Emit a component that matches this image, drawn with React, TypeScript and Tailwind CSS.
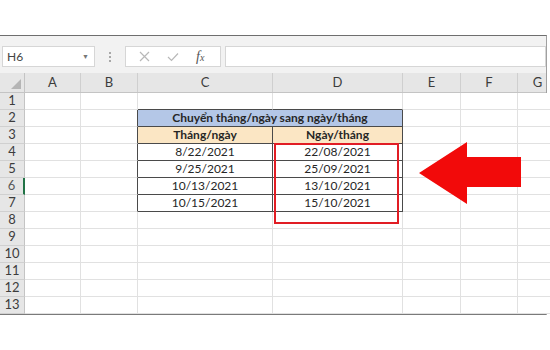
import React from "react";

const cols = ["A", "B", "C", "D", "E", "F", "G"];
const widths = ["w-[56px]", "w-[57px]", "w-[135px]", "w-[130px]", "w-[58px]", "w-[57px]", "w-[40px]"];

const dataLeft = ["8/22/2021", "9/25/2021", "10/13/2021", "10/15/2021"];
const dataRight = ["22/08/2021", "25/09/2021", "13/10/2021", "15/10/2021"];

// right border dark when cell touches table's left/right edges
function rightDark(col: number, row: number) {
  if (row < 2 || row > 7) return false;
  return col === 1 || col === 2 || col === 3;
}
function bottomDark(col: number, row: number) {
  if (col !== 2 && col !== 3) return false;
  return row >= 1 && row <= 7;
}

function Cell({ col, row }: { col: number; row: number }) {
  const rd = rightDark(col, row);
  const bd = bottomDark(col, row);
  let bg = "bg-white";
  let text = "";
  let bold = false;
  if (row === 3 && (col === 2 || col === 3)) {
    bg = "bg-[#fbe6c4]";
    bold = true;
    text = col === 2 ? "Tháng/ngày" : "Ngày/tháng";
  }
  if (row >= 4 && row <= 7 && col === 2) text = dataLeft[row - 4];
  if (row >= 4 && row <= 7 && col === 3) text = dataRight[row - 4];
  return (
    <div
      className={`${widths[col]} shrink-0 h-full flex items-center justify-center border-b border-r ${bg} ${
        rd ? "border-r-[#4a4a4a]" : "border-r-[#e1e1e1]"
      } ${bd ? "border-b-[#4a4a4a]" : "border-b-[#e1e1e1]"} ${bold ? "font-bold" : ""}`}
    >
      {text}
    </div>
  );
}

function Row({ row }: { row: number }) {
  const selected = row === 6;
  return (
    <div className="flex h-[17px]">
      <div
        className={`w-[25px] shrink-0 bg-[#e6e6e6] border-b border-b-[#d0d0d0] flex items-center justify-center text-[13px] text-[#3c3c3c] ${
          selected ? "border-r-2 border-r-[#217346] text-[#5a5a5a]" : "border-r border-r-[#c4c4c4]"
        }`}
      >
        {row}
      </div>
      {row === 2 ? (
        <>
          <Cell col={0} row={2} />
          <Cell col={1} row={2} />
          <div className="w-[265px] shrink-0 h-full flex items-center justify-center bg-[#b4c7e7] border-b border-r border-[#4a4a4a] font-bold">
            Chuyển tháng/ngày sang ngày/tháng
          </div>
          <Cell col={4} row={2} />
          <Cell col={5} row={2} />
          <Cell col={6} row={2} />
        </>
      ) : (
        cols.map((_, i) => <Cell key={i} col={i} row={row} />)
      )}
    </div>
  );
}

export default function App() {
  const rows = Array.from({ length: 13 }, (_, i) => i + 1);
  return (
    <div className="relative w-[550px] h-[350px] overflow-hidden bg-white font-['Lato',sans-serif] text-[12px] text-[#262626]">
      <div className="h-[35px]" />
      <div className="w-[547px] border-t border-t-[#6e6e6e] border-r border-r-[#a0a0a0]">
        {/* Formula bar */}
        <div className="h-[37px] bg-[#f2f2f2] flex items-center gap-[4px] pl-[2px] pt-[4px]">
          <div className="w-[93px] h-[21px] bg-white border border-[#d6d6d6] flex items-center justify-between px-[4px] text-[12px] text-[#444]">
            <span>H6</span>
            <span className="text-[7px] text-[#777] pr-[1px]">▼</span>
          </div>
          <div className="w-[22px] flex flex-col items-center gap-[2px]">
            <span className="w-[2px] h-[2px] bg-[#a8a8a8]" />
            <span className="w-[2px] h-[2px] bg-[#a8a8a8]" />
            <span className="w-[2px] h-[2px] bg-[#a8a8a8]" />
          </div>
          <div className="w-[96px] h-[21px] bg-white border border-[#d6d6d6] flex items-center pl-[13px] gap-[17px] text-[#b4b4b4]">
            <svg width="11" height="11" viewBox="0 0 11 11">
              <path d="M1 1 L10 10 M10 1 L1 10" stroke="#b8b8b8" strokeWidth="1.2" />
            </svg>
            <svg width="12" height="10" viewBox="0 0 12 10">
              <path d="M1 5 L4.5 8.5 L11 1.5" stroke="#b8b8b8" strokeWidth="1.2" fill="none" />
            </svg>
            <span className="font-['Liberation_Serif',serif] italic text-[14px] text-[#555] leading-none">
              f<span className="text-[10px]">x</span>
            </span>
          </div>
          <div className="flex-1 h-[21px] bg-white border border-[#d6d6d6]" />
        </div>
        {/* Column headers */}
        <div className="flex h-[20px] bg-[#e6e6e6] border-b border-b-[#c4c4c4] text-[13px] text-[#3c3c3c]">
          <div className="w-[25px] shrink-0 border-r border-r-[#c4c4c4] relative">
            <svg className="absolute right-[3px] bottom-[3px]" width="10" height="10" viewBox="0 0 10 10">
              <path d="M10 0 L10 10 L0 10 Z" fill="#b5b5b5" />
            </svg>
          </div>
          {cols.map((c, i) => (
            <div
              key={c}
              className={`${widths[i]} shrink-0 flex items-center justify-center border-r border-r-[#cfcfcf]`}
            >
              {c}
            </div>
          ))}
        </div>
        {rows.map((r) => (
          <Row key={r} row={r} />
        ))}
        <div className="h-[1px] bg-[#7a7a7a]" />
      </div>

      {/* Red highlight box */}
      <div className="absolute left-[274px] top-[143px] w-[125px] h-[81px] border-2 border-[#e11d24]" />
      {/* Arrow */}
      <svg className="absolute left-0 top-0" width="550" height="350" viewBox="0 0 550 350">
        <polygon points="419,173 467,142 467,157 521,157 521,187 467,187 467,204" fill="#f20a0a" />
      </svg>
    </div>
  );
}
